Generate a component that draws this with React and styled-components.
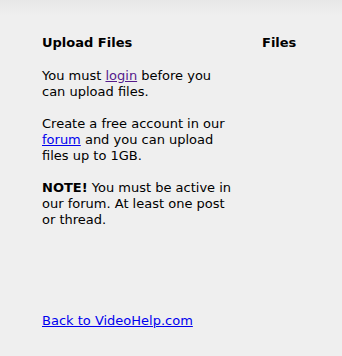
import React from "react";
import styled, { createGlobalStyle } from "styled-components";

const GlobalStyle = createGlobalStyle`
  html, body {
    margin: 0;
    padding: 0;
    background: #efefef;
  }
  body {
    font-family: "DejaVu Sans", Verdana, sans-serif;
    font-size: 13px;
    line-height: 16px;
    color: #000;
  }
`;

const Page = styled.div`
  min-height: 356px;
  background: linear-gradient(to bottom, #e7e7e7 0px, #efefef 16px, #efefef 100%);
  padding: 35px 0 0 42px;
  box-sizing: border-box;
`;

const Columns = styled.div`
  display: grid;
  grid-template-columns: 194px auto;
  column-gap: 26px;
`;

const Column = styled.div`
  display: flex;
  flex-direction: column;
  gap: 16px;
`;

const Heading = styled.h2`
  margin: 0;
  font-size: 13px;
  line-height: 16px;
  font-weight: bold;
`;

const Paragraph = styled.p`
  margin: 0;
  &:first-of-type {
    margin-top: 1px;
  }
`;

const Link = styled.a`
  color: ${(p) => (p.$visited ? "#551a8b" : "#0000ee")};
  text-decoration: underline;
`;

const Footer = styled.div`
  margin-top: 85px;
`;

export default function App() {
  return (
    <>
      <GlobalStyle />
      <Page>
        <Columns>
          <Column>
            <Heading>Upload Files</Heading>
            <Paragraph>
              You must <Link href="#" $visited>login</Link> before you can upload files.
            </Paragraph>
            <Paragraph>
              Create a free account in our <Link href="#">forum</Link> and you can
              upload files up to 1GB.
            </Paragraph>
            <Paragraph>
              <b>NOTE!</b> You must be active in our forum. At least one post or
              thread.
            </Paragraph>
          </Column>
          <Column>
            <Heading>Files</Heading>
          </Column>
        </Columns>
        <Footer>
          <Link href="#">Back to VideoHelp.com</Link>
        </Footer>
      </Page>
    </>
  );
}
